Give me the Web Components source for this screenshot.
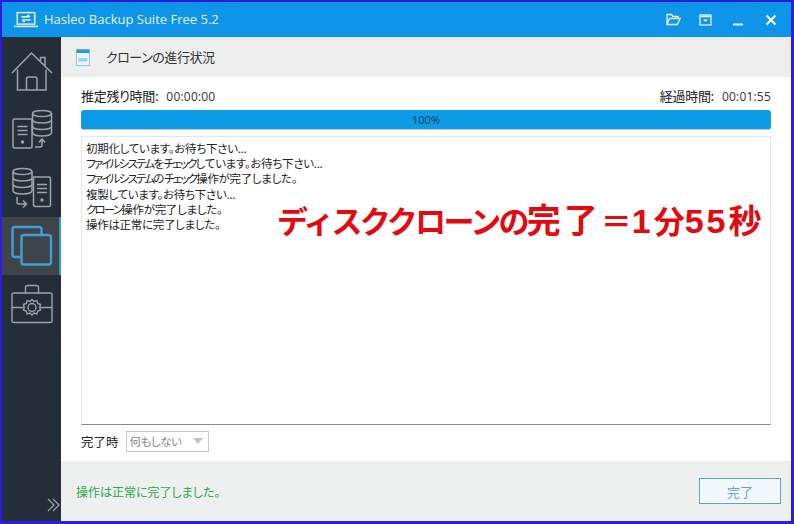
<!DOCTYPE html>
<html lang="ja">
<head>
<meta charset="utf-8">
<title>Hasleo Backup Suite Free 5.2</title>
<style>
  html, body { margin: 0; padding: 0; background: #fff; }
  body { width: 794px; height: 524px; overflow: hidden; font-family: "Noto Sans CJK JP", "Liberation Sans", sans-serif; }
</style>
</head>
<body>
<app-window></app-window>
<script>
const ICONS = {
  logo: '<svg width="24" height="17" viewBox="0 0 26 18" fill="none" stroke="#fff"><rect x="3.5" y="1.5" width="19" height="12.5" stroke-width="1.4"/><path d="M0 16.5h26" stroke-width="1.6"/><path d="M8 6h9M14.5 3.8 17 6M18 9.5H9M11.5 11.7 9 9.5" stroke-width="1.4"/></svg>',
  folder: '<svg width="15" height="13" viewBox="0 0 15 13" fill="none" stroke="#e8f5fe" stroke-width="1.3"><path d="M1 11.5V1.5h4.5l1.5 2h5v2M1 11.5h10.2l3-6H3.6z"/></svg>',
  box: '<svg width="13" height="12" viewBox="0 0 13 12" fill="none"><rect x="1" y="1" width="11" height="10" stroke="#e8f5fe" stroke-width="1.3"/><path d="M1 2.5h11" stroke="#e8f5fe" stroke-width="1.5"/><path d="M4 5.5h5L6.5 8z" fill="#e8f5fe"/></svg>',
  min: '<svg width="12" height="12" viewBox="0 0 12 12"><path d="M1 10.5h10" stroke="#e8f5fe" stroke-width="2"/></svg>',
  close: '<svg width="12" height="12" viewBox="0 0 12 12"><path d="M1.5 1.5l9 9M10.5 1.5l-9 9" stroke="#fff" stroke-width="2"/></svg>',
  home: '<svg width="42" height="42" viewBox="0 0 42 42" fill="none" stroke="#9ea3a7" stroke-width="1.5"><path d="M1 22 20.5 2 41 22M34 15V6.500h-4.500v4M6.500 18.500V39h28.500V18.500"/><path d="M15.500 39V28q0-2 2-2h6.500q2 0 2 2v11"/></svg>',
  backup: '<svg width="42" height="42" viewBox="0 0 42 42" fill="none" stroke="#9ea3a7" stroke-width="1.5"><path d="M21 10H3.500q-1.500 0-1.500 1.500v26q0 1.500 1.500 1.500h16q1.500 0 1.500-1.500zM6.500 17.500h10M6.500 21.500h10M6.500 25.500h10"/><circle cx="11.500" cy="33" r="1" fill="#9ea3a7"/><ellipse cx="31" cy="4.500" rx="9.500" ry="3"/><path d="M21.500 4.500v19.500q1 3 9.500 3t9.500-3V4.500M21.500 11q1 3 9.500 3t9.500-3M21.500 17.500q1 3 9.500 3t9.500-3"/><path d="M24 38h5q2 0 2-2v-5M28 33.500l3-3.500 3 3.500"/></svg>',
  restore: '<svg width="42" height="42" viewBox="0 0 42 42" fill="none" stroke="#9ea3a7" stroke-width="1.5"><ellipse cx="11.500" cy="4.500" rx="9.500" ry="3"/><path d="M2 4.500V24q1 3 9.500 3t9.500-3V4.500M2 11q1 3 9.500 3t9.500-3M2 17.500q1 3 9.500 3t9.500-3"/><path d="M22.500 10H38q1.500 0 1.500 1.500v26.500q0 1.500-1.500 1.500H24q-1.500 0-1.500-1.500zM26 17.500h10M26 21.500h10M26 25.500h10"/><circle cx="31" cy="33" r="1" fill="#9ea3a7"/><path d="M6 30v5q0 2 2 2h7M12 33.500l3.500 3.500-3.500 3.500"/></svg>',
  clone: '<svg width="42" height="42" viewBox="0 0 42 42" fill="none" stroke="#3f9fd8" stroke-width="2.400"><path d="M9 32H4q-2.500 0-2.500-2.500v-25Q1.500 2 4 2h24q2.500 0 2.500 2.500V10"/><rect x="10.500" y="10" width="29.500" height="29.500" rx="2.500"/></svg>',
  tools: '<svg width="42" height="40" viewBox="0 0 42 40" fill="none" stroke="#9ea3a7" stroke-width="1.4"><path d="M14.500 9V3.500q0-2 2-2h9q2 0 2 2V9"/><rect x="1" y="9" width="40" height="29.500" rx="1.500"/><path d="M1 23.500h11.500M29.500 23.500H41"/><circle cx="21" cy="23.500" r="4"/><path d="M21 15.500l2 2 2.800-.8 1 2.800 2.700 1-.8 2.900.8 2.700-2.700 1-1 2.800-2.800-.8-2 2-2-2-2.800.8-1-2.800-2.700-1 .8-2.700-.8-2.900 2.700-1 1-2.800 2.800.8z"/></svg>',
  chevrons: '<svg width="14" height="14" viewBox="0 0 14 14" fill="none" stroke="#9ea3a7" stroke-width="1.2"><path d="M1 1l6 6-6 6M6 1l6 6-6 6"/></svg>',
  page: '<svg width="14" height="17" viewBox="0 0 14 17"><rect x=".5" y=".5" width="13" height="16" fill="#e9f5fb" stroke="#8fcbe8"/><rect x=".5" y=".5" width="13" height="3.500" fill="#2a9dd8"/><rect x="2.500" y="9" width="9" height="3.500" fill="#9fd0e8"/></svg>'
};

// builds a plain shadow root from a style block and some markup
function shadow(el, css, html) {
  el.attachShadow({mode: 'open'});
  let template = document.createElement('template');
  template.innerHTML = `<style>${css}</style>${html}`;
  el.shadowRoot.appendChild(template.content.cloneNode(true));
}

class TitleBar extends HTMLElement {
  constructor() {
    super();
    shadow(this, `
      :host { display: flex; align-items: center; height: 35px; background: #0e95e9; color: #e6f4fe;
              font: 13px/35px "Open Sans", "Liberation Sans", sans-serif; flex: none; }
      .logo { display: flex; margin: 0 6px 0 12px; }
      .name { flex: 1; }
      .btn { display: flex; justify-content: center; align-items: center; }
    `, `
      <span class="logo">${ICONS.logo}</span>
      <span class="name">Hasleo Backup Suite Free 5.2</span>
      <span class="btn" style="width:15px;margin-right:18px">${ICONS.folder}</span>
      <span class="btn" style="width:13px;margin-right:20px">${ICONS.box}</span>
      <span class="btn" style="width:12px;margin-right:21px">${ICONS.min}</span>
      <span class="btn" style="width:12px;margin-right:14px">${ICONS.close}</span>
    `);
  }
}

class SideItem extends HTMLElement {
  constructor() {
    super();
    shadow(this, `
      :host { display: flex; align-items: center; justify-content: center; height: 58px; box-sizing: border-box; }
      :host([active]) { background: #3e4449; border-right: 2px solid #2f9ad8; padding-left: 2px; }
    `, `<slot></slot>`);
  }
}

class SideBar extends HTMLElement {
  constructor() {
    super();
    shadow(this, `
      :host { display: flex; flex-direction: column; width: 59px; background: #232e38; flex: none; padding-top: 6px; box-sizing: border-box; position: relative; }
      .more { position: absolute; right: 0; bottom: 9px; display: flex; }
    `, `
      <side-item>${ICONS.home}</side-item>
      <side-item>${ICONS.backup}</side-item>
      <side-item>${ICONS.restore}</side-item>
      <side-item active>${ICONS.clone}</side-item>
      <side-item>${ICONS.tools}</side-item>
      <span class="more">${ICONS.chevrons}</span>
    `);
  }
}

class PageHeader extends HTMLElement {
  constructor() {
    super();
    shadow(this, `
      :host { display: flex; align-items: center; height: 40px; background: #eeeeee; padding-left: 15px; flex: none;
              font-size: 13px; color: #333; letter-spacing: -.45px; }
      span { margin-left: 16px; position: relative; top: -1px; }
      svg { display: block; }
    `, `${ICONS.page}<span><slot></slot></span>`);
  }
}

class TimeRow extends HTMLElement {
  constructor() {
    super();
    shadow(this, `
      :host { display: flex; justify-content: space-between; height: 20px; line-height: 20px; font-size: 13px; color: #222; flex: none; }
      b { font-weight: 400; margin-right: 8px; letter-spacing: -.3px; }
      i { font-style: normal; font-family: "Open Sans", "Liberation Sans", sans-serif; font-size: 12px; color: #333; letter-spacing: .2px; }
    `, `
      <span><b>推定残り時間:</b><i>00:00:00</i></span>
      <span><b>経過時間:</b><i>00:01:55</i></span>
    `);
  }
}

class ProgressBar extends HTMLElement {
  constructor() {
    super();
    shadow(this, `
      :host { display: block; height: 20px; line-height: 20px; background: #0c9be6; border-radius: 3px; border-bottom: 1px solid #bcc; box-sizing: border-box;
              text-align: center; font: 11px/20px "Open Sans", "Liberation Sans", sans-serif; color: #1c3d52; flex: none; }
    `, `<slot></slot>`);
  }
}

class LogBox extends HTMLElement {
  constructor() {
    super();
    shadow(this, `
      :host { display: block; height: 289px; box-sizing: border-box; margin-top: 6px; padding: 4px 4px;
              border: 1px solid #e6e6e6; border-bottom: 1px solid #8a8a8a; font-size: 11.500px; line-height: 15.200px; color: #222; position: relative; flex: none; letter-spacing: -.3px; }
      div { white-space: nowrap; }
      u { text-decoration: none; letter-spacing: -1.800px; }
      .note { position: absolute; left: 195px; top: 62px; font: 700 31px/40px "Noto Sans CJK JP", sans-serif; color: #e4080f; white-space: nowrap; letter-spacing: 0; }
      .kana { letter-spacing: -2.700px; }
      .kan { font-size: 34px; letter-spacing: 3px; }
      .num { font: 700 34px/40px "Liberation Sans", sans-serif; letter-spacing: 3px; }
      .sec { font-size: 33px; }
    `, `
      <div>初期化しています。お待ち下さい...</div>
      <div><u>ファイルシステム</u>を<u>チェック</u>しています。お待ち下さい...</div>
      <div><u>ファイルシステム</u>の<u>チェック</u>操作が完了しました。</div>
      <div>複製しています。お待ち下さい...</div>
      <div><u>クローン</u>操作が完了しました。</div>
      <div>操作は正常に完了しました。</div>
      <span class="note"><span class="kana">ディスククローンの</span><span class="kan">完了</span>＝<span class="num">1</span>分<span class="num">55</span><span class="sec">秒</span></span>
    `);
  }
}

class WhenDone extends HTMLElement {
  constructor() {
    super();
    shadow(this, `
      :host { display: flex; align-items: center; height: 20px; margin-top: 6px; font-size: 12.500px; color: #222; flex: none; }
      .select { display: flex; align-items: center; justify-content: space-between; width: 83px; height: 21px; margin-left: 7px; box-sizing: border-box;
                border: 1px solid #c8c8c8; padding: 0 5px 0 3px; font-size: 11.500px; letter-spacing: -.5px; color: #888; }
      .arrow { width: 0; height: 0; border: 5px solid transparent; border-top: 6px solid #c2c2c2; border-bottom: 0; }
    `, `完了時<span class="select">何もしない<span class="arrow"></span></span>`);
  }
}

class PageFooter extends HTMLElement {
  constructor() {
    super();
    shadow(this, `
      :host { display: flex; align-items: center; justify-content: space-between; height: 60px; background: #eeefef; padding: 0 10px 0 15px; flex: none; box-sizing: border-box; margin-top: auto; }
      .msg { color: #2ba84a; font-size: 12px; }
      button { width: 82px; height: 26px; box-sizing: border-box; border: 1px solid #5da3c4; background: #f2f9fc; color: #6ba6c2; font: 13px "Noto Sans CJK JP", sans-serif; padding: 0; }
    `, `<span class="msg"><slot></slot></span><button>完了</button>`);
  }
}

class AppWindow extends HTMLElement {
  constructor() {
    super();
    shadow(this, `
      :host { display: flex; flex-direction: column; width: 794px; height: 524px; box-sizing: border-box; font-feature-settings: "palt";
              border: solid #2a1ed8; border-width: 2px 3px 3px 2px; background: #fff; }
      .body { display: flex; flex: 1; min-height: 0; }
      .main { display: flex; flex-direction: column; flex: 1; min-width: 0; }
      .content { display: flex; flex-direction: column; flex: 1; padding: 9px 20px 0; }
    `, `
      <title-bar></title-bar>
      <div class="body">
        <side-bar></side-bar>
        <div class="main">
          <page-header>クローンの進行状況</page-header>
          <div class="content">
            <time-row></time-row>
            <progress-bar style="margin-top:4px">100%</progress-bar>
            <log-box></log-box>
            <when-done></when-done>
          </div>
          <page-footer>操作は正常に完了しました。</page-footer>
        </div>
      </div>
    `);
  }
}

customElements.define('title-bar', TitleBar);
customElements.define('side-item', SideItem);
customElements.define('side-bar', SideBar);
customElements.define('page-header', PageHeader);
customElements.define('time-row', TimeRow);
customElements.define('progress-bar', ProgressBar);
customElements.define('log-box', LogBox);
customElements.define('when-done', WhenDone);
customElements.define('page-footer', PageFooter);
customElements.define('app-window', AppWindow);
</script>
</body>
</html>
